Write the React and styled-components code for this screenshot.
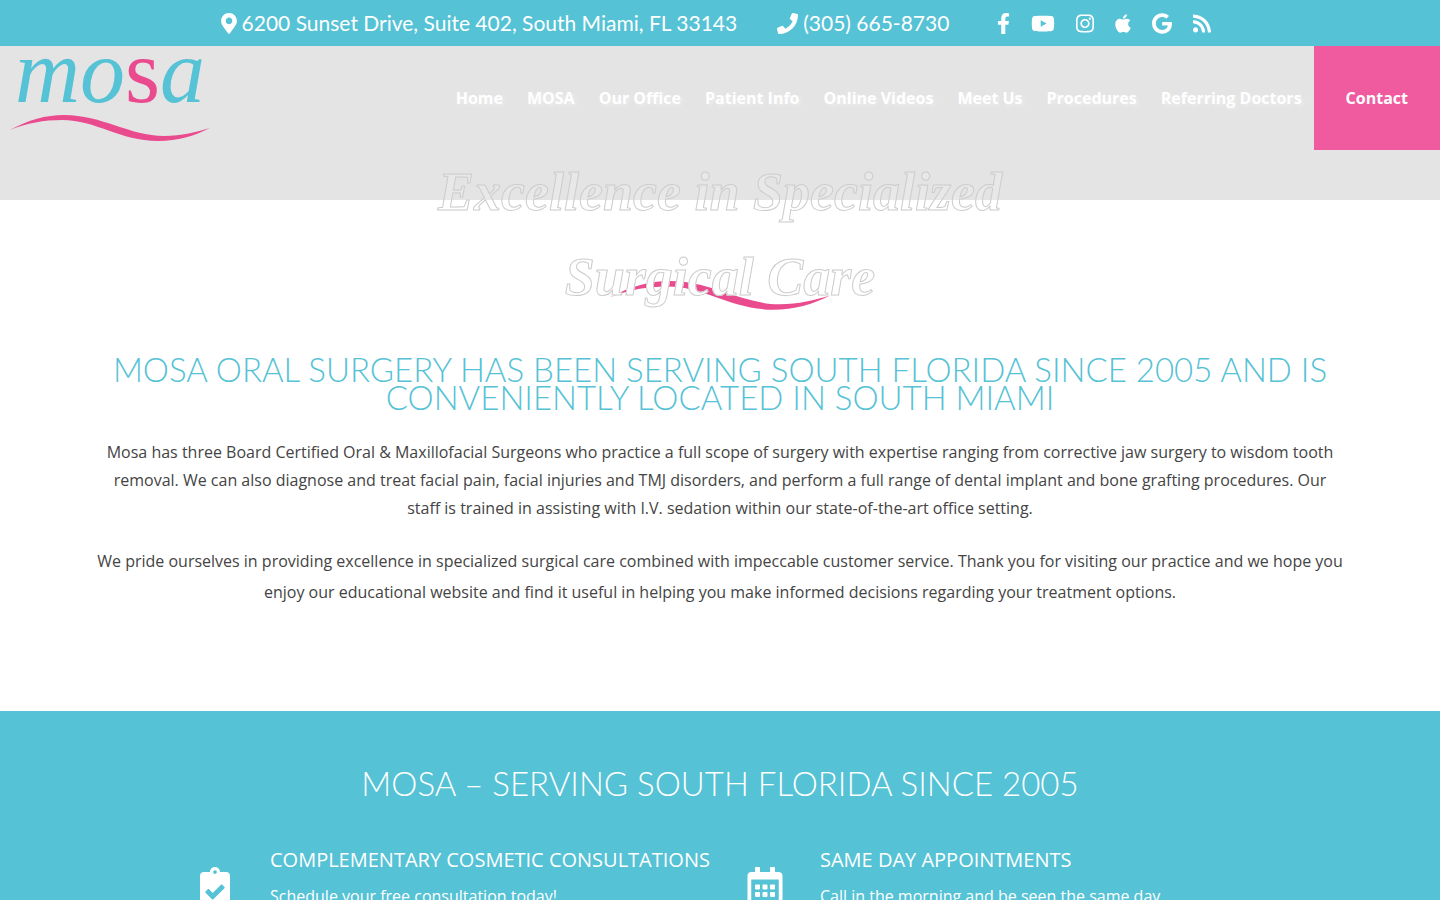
import React from 'react'
import styled, { createGlobalStyle } from 'styled-components'
import {
  FaMapMarkerAlt,
  FaPhone,
  FaFacebookF,
  FaYoutube,
  FaInstagram,
  FaApple,
  FaGoogle,
  FaRss,
  FaClipboardCheck,
  FaRegCalendarAlt,
} from 'react-icons/fa'

const navLinks = [
  'Home',
  'MOSA',
  'Our Office',
  'Patient Info',
  'Online Videos',
  'Meet Us',
  'Procedures',
  'Referring Doctors',
]

const socials = [
  { name: 'Facebook', icon: FaFacebookF, width: 13 },
  { name: 'YouTube', icon: FaYoutube, width: 24 },
  { name: 'Instagram', icon: FaInstagram, width: 18 },
  { name: 'Apple', icon: FaApple, width: 16 },
  { name: 'Google', icon: FaGoogle, width: 20 },
  { name: 'Blog feed', icon: FaRss, width: 18 },
]

const features = [
  {
    title: 'COMPLEMENTARY COSMETIC CONSULTATIONS',
    text: 'Schedule your free consultation today!',
    icon: FaClipboardCheck,
  },
  {
    title: 'SAME DAY APPOINTMENTS',
    text: 'Call in the morning and be seen the same day.',
    icon: FaRegCalendarAlt,
  },
]

function Swoosh() {
  return (
    <svg viewBox="0 0 200 28" aria-hidden="true">
      <path
        fill="#e94b8e"
        d="M0 16C18 6 36 1 54 1C92 1 120 22 154 22C172 22 186 18 200 14C184 22 168 27 148 27C110 27 86 6 52 6C34 6 17 9 0 16Z"
      />
    </svg>
  )
}

function App() {
  return (
    <>
      <GlobalStyle />
      <TopBar>
        <TopLink href="#map">
          <BarIcon $width={16}>
            <FaMapMarkerAlt />
          </BarIcon>
          6200 Sunset Drive, Suite 402, South Miami, FL 33143
        </TopLink>
        <TopLink href="tel:3056658730">
          <BarIcon $width={21}>
            <FaPhone />
          </BarIcon>
          (305) 665-8730
        </TopLink>
        <Socials>
          {socials.map(({ name, icon: Icon, width }) => (
            <a key={name} href="#social" aria-label={name}>
              <BarIcon $width={width}>
                <Icon />
              </BarIcon>
            </a>
          ))}
        </Socials>
      </TopBar>

      <Hero>
        <Header>
          <Logo href="#home">
            <LogoWord>
              mo<em>s</em>a
            </LogoWord>
            <Swoosh />
          </Logo>
          <Nav>
            {navLinks.map((link) => (
              <NavLink key={link} href="#nav">
                {link}
              </NavLink>
            ))}
            <ContactLink href="#contact">Contact</ContactLink>
          </Nav>
        </Header>
        <HeroTitle>Excellence in Specialized Surgical Care</HeroTitle>
      </Hero>

      <Intro>
        <Divider>
          <Swoosh />
        </Divider>
        <Heading>
          MOSA ORAL SURGERY HAS BEEN SERVING SOUTH FLORIDA SINCE 2005 AND IS CONVENIENTLY LOCATED IN SOUTH MIAMI
        </Heading>
        <Lead>
          Mosa has three Board Certified Oral &amp; Maxillofacial Surgeons who practice a full scope of surgery with
          expertise ranging from corrective jaw surgery to wisdom tooth removal. We can also diagnose and treat facial
          pain, facial injuries and TMJ disorders, and perform a full range of dental implant and bone grafting
          procedures. Our staff is trained in assisting with I.V. sedation within our state-of-the-art office setting.
        </Lead>
        <Closing>
          We pride ourselves in providing excellence in specialized surgical care combined with impeccable customer
          service. Thank you for visiting our practice and we hope you enjoy our educational website and find it useful
          in helping you make informed decisions regarding your treatment options.
        </Closing>
      </Intro>

      <Services>
        <Heading $light>MOSA – SERVING SOUTH FLORIDA SINCE 2005</Heading>
        <Features>
          {features.map(({ title, text, icon: Icon }) => (
            <Feature key={title}>
              <FeatureIcon>
                <Icon />
              </FeatureIcon>
              <div>
                <h3>{title}</h3>
                <p>{text}</p>
              </div>
            </Feature>
          ))}
        </Features>
      </Services>
    </>
  )
}

const GlobalStyle = createGlobalStyle`
  * {
    box-sizing: border-box;
  }

  body {
    margin: 0;
    background: #fff;
    color: #444;
    font-family: 'Open Sans', sans-serif;
    font-size: 16px;
  }

  h1, h2, h3, p {
    margin: 0;
  }

  a {
    color: inherit;
    text-decoration: none;
  }

  svg {
    display: block;
  }
`

const TopBar = styled.div`
  min-height: 46px;
  display: flex;
  align-items: center;
  justify-content: center;
  gap: 40px;
  background: #55c2d5;
  color: #fff;

  @media only screen and (max-width: 1100px) {
    flex-wrap: wrap;
    gap: 8px 24px;
    padding: 8px;
  }
`

const BarIcon = styled.span`
  display: block;

  svg {
    width: ${(props) => props.$width}px;
    height: 21px;
  }
`

const TopLink = styled.a`
  display: flex;
  align-items: center;
  gap: 5px;
  font-family: Lato, sans-serif;
  font-size: 21px;
  line-height: 28px;
`

const Socials = styled.div`
  display: flex;
  align-items: center;
  gap: 21px;
  padding: 0 8px;
`

const Hero = styled.section`
  height: 154px;
  background: #e4e4e4;
`

const Header = styled.header`
  height: 104px;
  display: flex;
  justify-content: space-between;
`

const Logo = styled.a`
  width: 220px;
  padding: 0 10px;
  flex-shrink: 0;
`

const LogoWord = styled.span`
  display: block;
  height: 68px;
  color: #55c2d5;
  font-family: 'Liberation Serif', serif;
  font-size: 90px;
  font-style: italic;
  line-height: 52px;
  text-align: center;

  em {
    color: #e94b8e;
    font-style: normal;
  }
`

const Nav = styled.nav`
  display: flex;
  align-items: center;
  color: #fff;
  font-size: 16px;
  font-weight: 700;
`

const NavLink = styled.a`
  padding: 0 12px;
  white-space: nowrap;
  text-shadow: 2px 2px 4px rgba(255, 255, 255, 0.4);
`

const ContactLink = styled.a`
  align-self: stretch;
  display: flex;
  align-items: center;
  padding: 0 32px;
  background: #f05b9f;
`

/* the fill turns white where the title leaves the grey banner */
const HeroTitle = styled.h1`
  position: relative;
  z-index: 1;
  max-width: 680px;
  margin: 0 auto;
  background: linear-gradient(#e8e8e8 50px, #fff 50px) text;
  -webkit-background-clip: text;
  color: transparent;
  font-family: 'Liberation Serif', serif;
  font-size: 54px;
  font-style: italic;
  font-weight: 700;
  line-height: 85px;
  text-align: center;
  -webkit-text-stroke: 1px #ccc;
`

const Intro = styled.section`
  padding: 80px 90px 103px;
  text-align: center;

  @media only screen and (max-width: 800px) {
    padding: 80px 20px;
  }
`

const Divider = styled.div`
  width: 220px;
  margin: 0 auto 44px;
`

const Heading = styled.h2`
  color: ${(props) => (props.$light ? '#fff' : '#55c2d5')};
  font-family: Lato, sans-serif;
  font-size: 33px;
  font-weight: 300;
  line-height: 28px;
  text-align: center;
`

const Lead = styled.p`
  margin-top: 27px;
  padding: 0 10px;
  line-height: 28px;
`

const Closing = styled.p`
  margin-top: 24px;
  line-height: 31px;
`

const Services = styled.section`
  padding: 58px 20px 60px;
  background: #55c2d5;
  color: #fff;
`

const Features = styled.div`
  max-width: 1100px;
  margin: 47px auto 0;
  display: grid;
  grid-template-columns: 1fr 1fr;

  @media only screen and (max-width: 900px) {
    grid-template-columns: 1fr;
    gap: 30px;
  }
`

const Feature = styled.div`
  display: flex;
  gap: 10px;

  h3 {
    font-size: 20px;
    font-weight: 400;
    line-height: 32px;
  }

  p {
    margin-top: 6px;
    line-height: 28px;
  }
`

const FeatureIcon = styled.div`
  width: 90px;
  padding-top: 23px;
  display: flex;
  justify-content: center;
  flex-shrink: 0;
  font-size: 40px;
`

export default App
